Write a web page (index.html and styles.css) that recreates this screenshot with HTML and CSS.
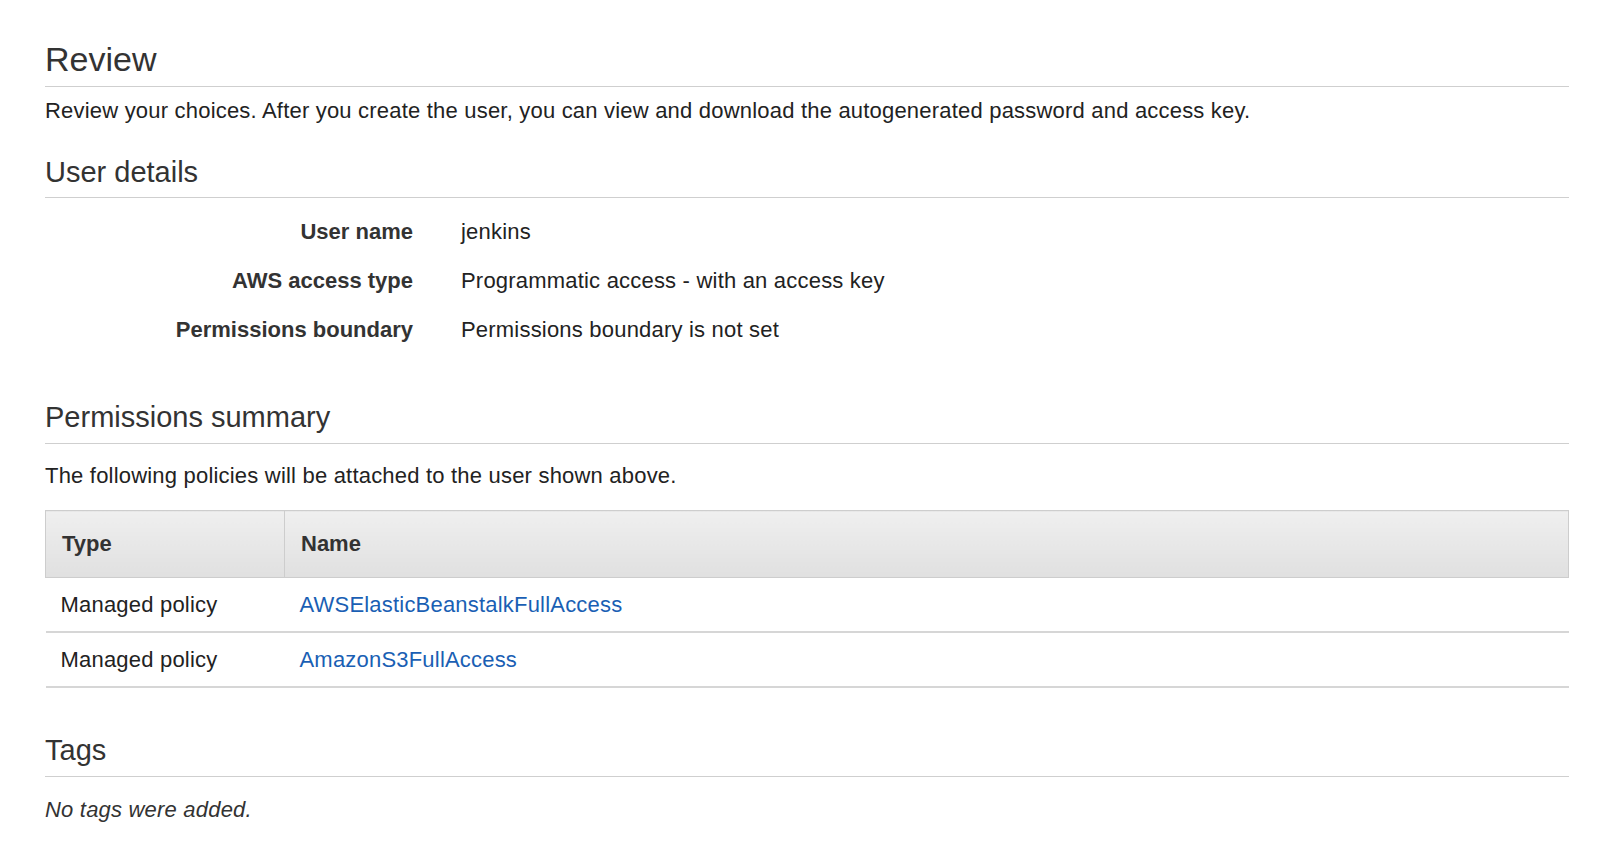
FILE: index.html
```html
<!DOCTYPE html>
<html lang="en">
<head>
	<meta charset="UTF-8">
	<title>Review</title>
	<link rel="stylesheet" href="styles.css">
</head>
<body>
	<div class="page">
		<h1 class="title">Review</h1>
		<p class="intro">Review your choices. After you create the user, you can view and download the autogenerated password and access key.</p>

		<h2 class="section first">User details</h2>
		<dl class="details">
			<dt>User name</dt><dd>jenkins</dd>
			<dt>AWS access type</dt><dd>Programmatic access - with an access key</dd>
			<dt>Permissions boundary</dt><dd>Permissions boundary is not set</dd>
		</dl>

		<h2 class="section perms">Permissions summary</h2>
		<p class="note">The following policies will be attached to the user shown above.</p>
		<table class="policies">
			<thead>
				<tr><th class="type">Type</th><th>Name</th></tr>
			</thead>
			<tbody>
				<tr><td>Managed policy</td><td><a href="#">AWSElasticBeanstalkFullAccess</a></td></tr>
				<tr><td>Managed policy</td><td><a href="#">AmazonS3FullAccess</a></td></tr>
			</tbody>
		</table>

		<h2 class="section tags">Tags</h2>
		<p class="note empty">No tags were added.</p>
	</div>
</body>
</html>
```

FILE: styles.css
```css
body,h1,h2,p,dl,dd,dt{margin: 0;padding: 0;}
body{background-color: #fff;color: #222;font-family: "Liberation Sans", Arial, sans-serif;}
.page{padding: 0 31px 40px 45px;}

.title{margin-top: 39px;padding-bottom: 7px;border-bottom: 1px solid #cfcfcf;font-size: 34px;line-height: 40px;font-weight: normal;color: #333;}
.intro{margin-top: 12px;font-size: 22px;line-height: 24px;letter-spacing: 0.2px;}

.section{padding-bottom: 8px;border-bottom: 1px solid #cfcfcf;font-size: 29px;line-height: 36px;font-weight: normal;color: #333;}
.section.first{margin-top: 31px;padding-bottom: 7px;}
.section.perms{margin-top: 44px;}
.section.tags{margin-top: 44px;}

.details{display: grid;grid-template-columns: 368px 1fr;column-gap: 48px;margin-top: 10px;font-size: 22px;line-height: 24px;}
.details dt,.details dd{padding: 12px 0 13px;}
.details dd{letter-spacing: 0.2px;}
.details dt{text-align: right;font-weight: bold;color: #333;}

.note{margin-top: 20px;font-size: 22px;line-height: 24px;letter-spacing: 0.2px;}
.empty{margin-top: 21px;font-style: italic;color: #333;}

.policies{width: 100%;margin-top: 22px;border-collapse: collapse;font-size: 22px;line-height: 24px;}
.policies th{height: 66px;padding: 0 16px;border: 1px solid #cdcdcd;background: linear-gradient(#efefef, #e0e0e0);text-align: left;font-weight: bold;color: #333;}
.policies th.type{width: 206px;}
.policies td{height: 53px;padding: 0 16px 0 15px;border-bottom: 2px solid #d6d6d6;letter-spacing: 0.2px;}
.policies a{color: #1a5fb4;text-decoration: none;}
```
